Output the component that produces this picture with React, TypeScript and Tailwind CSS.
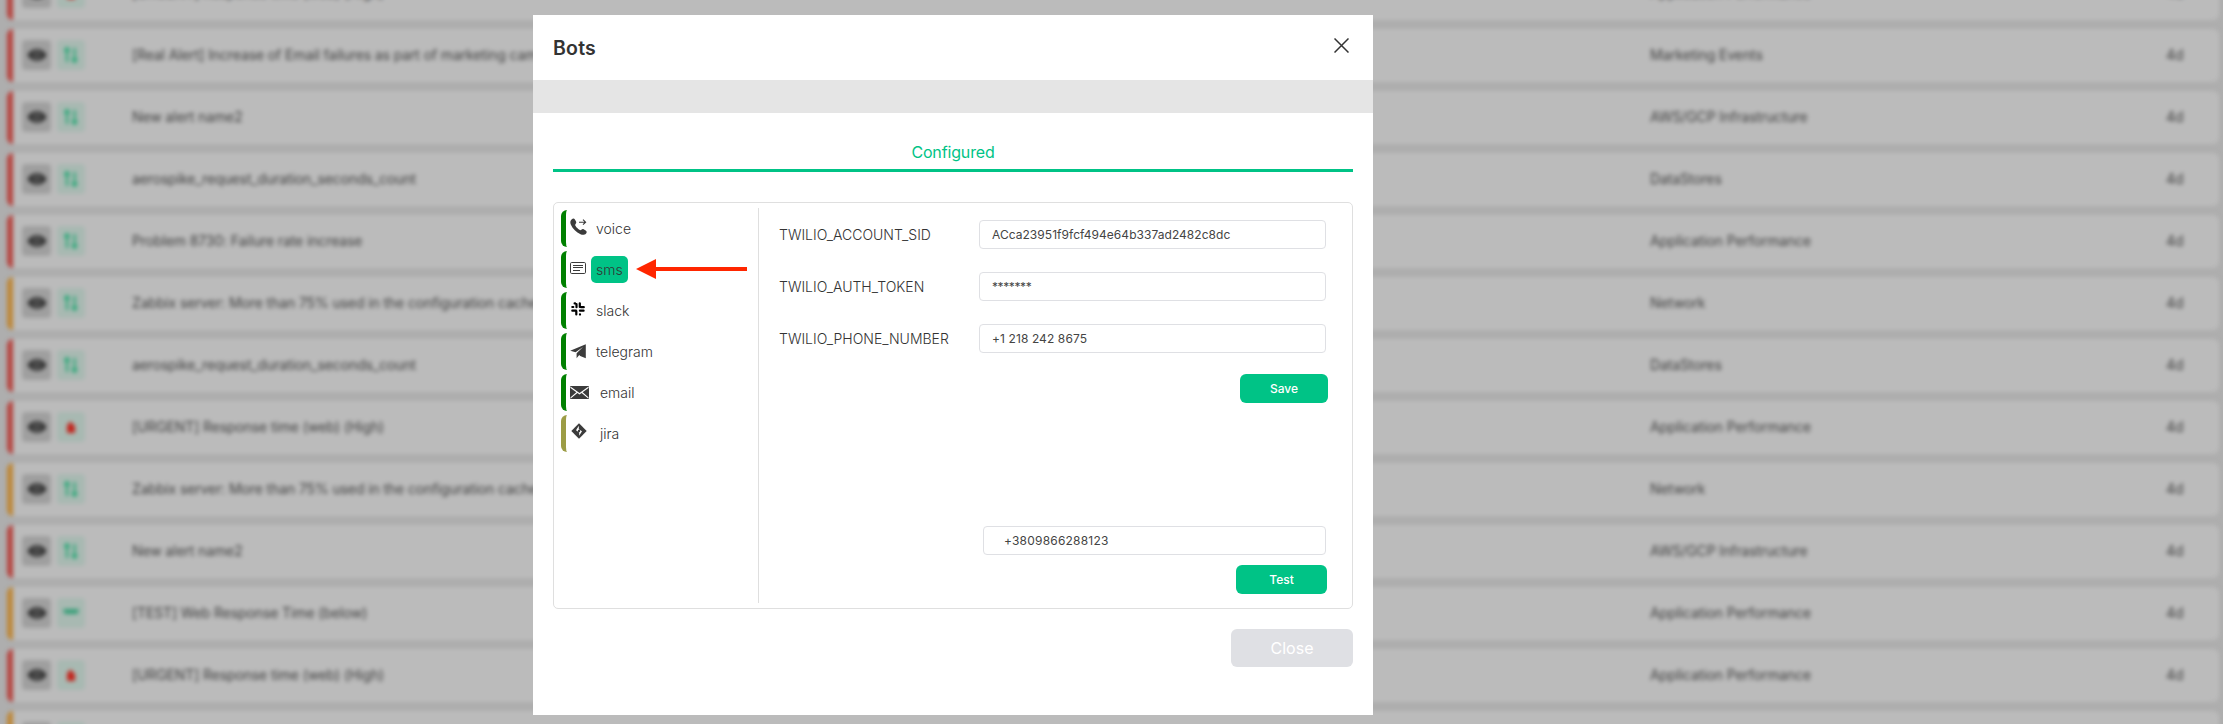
import type { ReactNode } from "react";

type Row = { bar: "red" | "amber"; kind: "arrows" | "fire" | "text"; name: string; group: string };

const rows: Row[] = [
  { bar: "red", kind: "fire", name: "[URGENT] Response time (web) (High)", group: "Application Performance" },
  { bar: "red", kind: "arrows", name: "[Real Alert] Increase of Email failures as part of marketing campaign", group: "Marketing Events" },
  { bar: "red", kind: "arrows", name: "New alert name2", group: "AWS/GCP Infrastructure" },
  { bar: "red", kind: "arrows", name: "aerospike_request_duration_seconds_count", group: "DataStores" },
  { bar: "red", kind: "arrows", name: "Problem 8730: Failure rate increase", group: "Application Performance" },
  { bar: "amber", kind: "arrows", name: "Zabbix server: More than 75% used in the configuration cache", group: "Network" },
  { bar: "red", kind: "arrows", name: "aerospike_request_duration_seconds_count", group: "DataStores" },
  { bar: "red", kind: "fire", name: "[URGENT] Response time (web) (High)", group: "Application Performance" },
  { bar: "amber", kind: "arrows", name: "Zabbix server: More than 75% used in the configuration cache", group: "Network" },
  { bar: "red", kind: "arrows", name: "New alert name2", group: "AWS/GCP Infrastructure" },
  { bar: "amber", kind: "text", name: "[TEST] Web Response Time (below)", group: "Application Performance" },
  { bar: "red", kind: "fire", name: "[URGENT] Response time (web) (High)", group: "Application Performance" },
  { bar: "amber", kind: "arrows", name: "", group: "" },
];

function KindIcon({ kind }: { kind: Row["kind"] }) {
  if (kind === "arrows")
    return (
      <svg width="16" height="18" viewBox="0 0 16 18" fill="none" stroke="#1fa672" strokeWidth="2">
        <path d="M4 16V2M1.500 5L4 2l2.500 3M11.500 2v14M9 13l2.500 3 2.500-3" />
      </svg>
    );
  if (kind === "fire")
    return (
      <svg width="12" height="14" viewBox="0 0 12 14" fill="#c2251d">
        <path d="M5.500 1.500L10 6v7H2V5z" />
      </svg>
    );
  return (
    <svg className="mb-[2px]" width="16" height="10" viewBox="0 0 16 10" fill="#379f78">
      <path d="M0 2h16l-1.500 5H1.500z" />
    </svg>
  );
}

function AlertRow({ row }: { row: Row }) {
  return (
    <div className="flex h-[53px] shrink-0 items-center overflow-hidden rounded-md bg-[#bbbbbb]">
      <div className={row.bar === "red" ? "h-full w-1.5 bg-[#b5443f]" : "h-full w-1.5 bg-[#bd8636]"} />
      <div className="mb-px ml-[9px] flex h-[30px] w-[29px] items-center justify-center rounded bg-[#9f9f9f]">
        <svg width="20" height="12" viewBox="0 0 20 12">
          <path d="M.5 6C3 1.500 6.500.3 10 .3S17 1.500 19.500 6c-2.500 4.500-6 5.700-9.500 5.700S3 10.500.5 6z" fill="#2d2d2d" />
          <circle cx="10" cy="6" r="3.200" fill="none" stroke="#888888" strokeWidth="1.200" />
        </svg>
      </div>
      <div className="mb-px ml-1.5 flex h-[30px] w-[28px] items-center justify-center rounded bg-[#a8b9b2]">
        <KindIcon kind={row.kind} />
      </div>
      <div className="mb-[2px] ml-[47px] w-[1518px] whitespace-nowrap">{row.name}</div>
      <div className="mb-[2px] w-[516px] whitespace-nowrap">{row.group}</div>
      <div className="mb-[2px]">{row.name ? "4d" : ""}</div>
    </div>
  );
}

const PhoneIcon = (
  <svg width="17" height="18" viewBox="0 0 17 18" fill="#3b3b3b">
    <path d="M1.800 1.200C3 .2 4.200.3 4.900 1.500l1 1.800c.6 1.100.4 1.900-.3 2.700-.6.700-.5 1.100 0 2 1 1.600 2.200 2.800 3.800 3.800.8.500 1.300.5 2-.1.800-.7 1.600-.8 2.600-.2l1.700 1c1.200.8 1.300 1.900.4 2.900-1.500 1.700-3.500 1.800-5.600.9C6.300 14.500 2.700 10.900.9 6.800 0 4.600 0 2.700 1.800 1.200z" />
    <path d="M9 4.200h6.500M13 1.700l2.600 2.500L13 6.700" fill="none" stroke="#3b3b3b" strokeWidth="1.100" />
  </svg>
);
const SmsIcon = (
  <svg width="17" height="13" viewBox="0 0 17 13" fill="none" stroke="#3b3b3b">
    <rect x="0.500" y="0.500" width="15" height="11" rx="1.200" strokeWidth="1" />
    <path d="M3 3.500h10M3 5.500h10M3 8.500h7" strokeWidth="1" />
  </svg>
);
const SlackIcon = (
  <svg width="14" height="14" viewBox="0 0 14 14" fill="none" stroke="#000" strokeWidth="2.200" strokeLinecap="round">
    <path d="M5.500 2.200V5.200M10 5.200h2.800M8.800 1.300V5M1.300 5h1M1.300 8.700H5M8.900 8.700h3.700M5.300 9v3.500M9 12.300v.3M3.600 1.400h.5M12.700 5v.1" />
  </svg>
);
const TelegramIcon = (
  <svg width="17" height="15" viewBox="0 0 17 15" fill="#3b3b3b">
    <path d="M15.800.3L.2 6.800l5.400 1.400L13 3 6.600 9.300v5l2.600-3.300 1 .9 5.600 2.300z" />
  </svg>
);
const EmailIcon = (
  <svg width="19" height="13" viewBox="0 0 19 13">
    <rect width="19" height="13" rx="1" fill="#3b3b3b" />
    <path d="M.5 1.200l9 6.600 9-6.600M.7 11.800l6.300-5.300M18.300 11.800L12 6.500" fill="none" stroke="#fff" strokeWidth="1.100" />
  </svg>
);
const JiraIcon = (
  <svg width="16" height="16" viewBox="0 0 16 16">
    <path d="M8 .3L15.700 8 8 15.700.3 8z" fill="#3b3b3b" />
    <path d="M7.800 2.800v3.400L11 8.300l-2.800 4.500V9.500L5 7.300z" fill="#fff" />
    <circle cx="8" cy="8" r="1.200" fill="#3b3b3b" />
  </svg>
);

type Bot = { name: string; icon: ReactNode; box: string; label: string; olive?: boolean };
const bots: Bot[] = [
  { name: "voice", icon: PhoneIcon, box: "pt-2 w-[26px]", label: "" },
  { name: "sms", icon: SmsIcon, box: "pt-[11px] w-[26px]", label: "bg-[#00c386]" },
  { name: "slack", icon: SlackIcon, box: "pt-[10px] pl-px w-[26px]", label: "" },
  { name: "telegram", icon: TelegramIcon, box: "pt-[11px] w-[26px]", label: "" },
  { name: "email", icon: EmailIcon, box: "pt-[12px] w-[30px]", label: "" },
  { name: "jira", icon: JiraIcon, box: "pt-[8px] pl-px w-[30px]", label: "", olive: true },
];

function BotItem({ bot }: { bot: Bot }) {
  return (
    <div
      className={
        bot.olive
          ? "flex h-[37px] rounded-md border-l-[5px] border-[#9c9c45]"
          : "flex h-[37px] rounded-md border-l-[5px] border-[#008000]"
      }
    >
      <div className={"ml-1 shrink-0 " + bot.box}>{bot.icon}</div>
      <div className={"-ml-[5px] mt-[5px] flex h-[27px] items-center rounded-[5px] px-[5px] " + bot.label}>{bot.name}</div>
    </div>
  );
}

function Field({ label, value, tone }: { label: string; value: string; tone: string }) {
  return (
    <div className="flex h-[29px] items-center">
      <div className="mb-px w-[200px] text-[14px] font-light">{label}</div>
      <div className={"flex h-[29px] w-[347px] items-center rounded border border-[#dfe0e4] pl-3 text-[12px] text-[#444444] " + tone}>{value}</div>
    </div>
  );
}

export default function App() {
  return (
    <div className="relative h-[724px] w-[2223px] overflow-hidden bg-[#aeaeae] font-['Inter',sans-serif]">
      <div className="h-full overflow-hidden">
        <div className="-mt-[33px] ml-[7px] flex w-[2212px] flex-col gap-[9px] text-[14px] tracking-[-0.12px] text-[#404040] blur-[2px]">
          {rows.map((row, i) => (
            <AlertRow key={i} row={row} />
          ))}
        </div>
      </div>

      <div className="absolute top-[15px] left-[533px] flex h-[700px] w-[840px] flex-col bg-white text-[#333333]">
        <div className="flex h-[65px] shrink-0 items-center justify-between px-5">
          <h1 className="pt-[3px] text-[19.5px] font-semibold tracking-[0.2px]">Bots</h1>
          <svg className="mr-1 mb-[4px]" width="15" height="15" viewBox="0 0 15 15" stroke="#333" strokeWidth="1.500">
            <path d="M.5.5l14 14M14.500.5l-14 14" />
          </svg>
        </div>
        <div className="h-[33px] shrink-0 bg-[#e5e5e5]" />
        <div className="mx-5 mt-[22px] flex h-[37px] shrink-0 justify-center border-b-[3px] border-[#00c386] pt-[5px] text-[16px] leading-6 tracking-[-0.15px] text-[#00c386]">
          Configured
        </div>
        <div className="mx-5 mt-[30px] flex h-[407px] shrink-0 rounded-[5px] border border-[#dfdfdf] py-[5px]">
          <div className="flex w-[205px] flex-col gap-1 border-r border-[#dfdfdf] pt-[2px] pl-[7px] text-[14px] font-light">
            {bots.map((bot) => (
              <BotItem key={bot.name} bot={bot} />
            ))}
          </div>
          <div className="flex flex-1 flex-col pt-3 pl-5">
            <div className="flex flex-col gap-[23px]">
              <Field label="TWILIO_ACCOUNT_SID" value="ACca23951f9fcf494e64b337ad2482c8dc" tone="tracking-[0.04px]" />
              <Field label="TWILIO_AUTH_TOKEN" value="*******" tone="tracking-[-0.4px]" />
              <Field label="TWILIO_PHONE_NUMBER" value="+1 218 242 8675" tone="tracking-[0.1px]" />
            </div>
            <button className="mt-[21px] ml-[461px] h-[29px] w-[88px] rounded-[6px] bg-[#00c386] text-[12px] font-medium text-white">
              Save
            </button>
            <div className="mt-[123px] ml-[204px] flex h-[29px] w-[343px] items-center rounded border border-[#dfe0e4] pl-5 text-[12px] tracking-[0.2px] text-[#444444]">
              +3809866288123
            </div>
            <button className="mt-[10px] ml-[457px] h-[29px] w-[91px] rounded-[6px] bg-[#00c386] text-[12px] font-medium text-white">
              Test
            </button>
          </div>
        </div>
        <button className="mt-5 mr-5 h-[38px] w-[122px] shrink-0 self-end rounded-[6px] bg-[#dfe0e4] text-[16px] text-white">
          Close
        </button>
      </div>

      <svg className="absolute top-[258px] left-[636px]" width="112" height="22" viewBox="0 0 112 22" fill="#ff2600">
        <path d="M0 11L20 1v8h91v4H20v8z" />
      </svg>
    </div>
  );
}
